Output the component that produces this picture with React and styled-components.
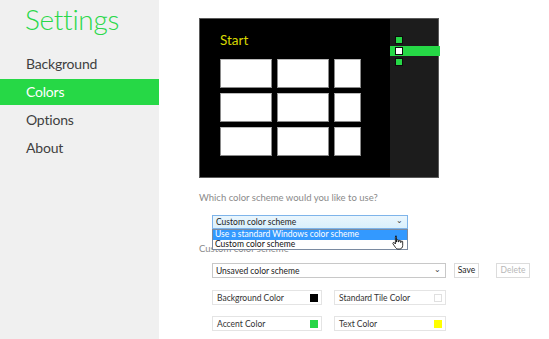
import React from "react"
import styled, { createGlobalStyle } from "styled-components"

const GlobalStyle = createGlobalStyle`
  html, body {
    margin: 0;
    padding: 0;
    background: #ffffff;
    font-family: Lato, "Open Sans", sans-serif;
  }
`

const menu = ["Background", "Colors", "Options", "About"]
const tileRows = [0, 1, 2]
const schemes = ["Use a standard Windows color scheme", "Custom color scheme"]
const colorFields = [
  { label: "Background Color", color: "#000000" },
  { label: "Standard Tile Color", color: "#ffffff", outline: true },
  { label: "Accent Color", color: "#26d646" },
  { label: "Text Color", color: "#ffff00" },
]

const HandCursor = () => (
  <svg width="12" height="15" viewBox="0 0 12 15">
    <path
      d="M3.5 1.2c.6 0 1 .4 1 1V7h.3V5.6c0-.5.4-.9.9-.9s.9.4.9.9V7h.3V6.2c0-.5.4-.9.9-.9s.9.4.9.9V7.5h.3v-.6c0-.5.4-.9.9-.9s.8.4.8.9v3.6c0 2-1.3 3.5-3.3 3.5H6.2c-1.2 0-2-.5-2.7-1.5L1 8.9c-.3-.5-.2-1 .2-1.3.4-.3 1-.2 1.3.2l.9 1.2V2.2c0-.6.4-1 1-1z"
      fill="#ffffff"
      stroke="#000000"
      strokeWidth="0.8"
    />
  </svg>
)

class App extends React.Component {
  render() {
    return (
      <Page>
        <GlobalStyle />
        <Sidebar>
          <Title>Settings</Title>
          <Menu>
            {menu.map((item) => (
              <MenuItem key={item} active={item === "Colors"}>
                {item}
              </MenuItem>
            ))}
          </Menu>
        </Sidebar>
        <Main>
          <Preview>
            <StartArea>
              <StartLabel>Start</StartLabel>
              <TileGrid>
                {tileRows.map((r) => (
                  <React.Fragment key={r}>
                    <Tile />
                    <Tile />
                    <Tile />
                  </React.Fragment>
                ))}
              </TileGrid>
            </StartArea>
            <Charms>
              <CharmDot />
              <CharmBar>
                <CharmDot selected />
              </CharmBar>
              <CharmDot />
            </Charms>
          </Preview>

          <Question>Which color scheme would you like to use?</Question>

          <DropdownWrap>
            <SchemeSelect>
              <span>Custom color scheme</span>
              <Chevron>⌄</Chevron>
            </SchemeSelect>
            <OptionList>
              {schemes.map((s, i) => (
                <OptionItem key={s} highlighted={i === 0}>
                  {s}
                </OptionItem>
              ))}
            </OptionList>
            <CursorSpot>
              <HandCursor />
            </CursorSpot>
          </DropdownWrap>

          <SubHeading>Custom color scheme</SubHeading>

          <SchemeRow>
            <PlainSelect>
              <span>Unsaved color scheme</span>
              <Chevron>⌄</Chevron>
            </PlainSelect>
            <Button>Save</Button>
            <Button disabled>Delete</Button>
          </SchemeRow>

          <ColorGrid>
            {colorFields.map((f) => (
              <ColorField key={f.label}>
                <span>{f.label}</span>
                <Swatch color={f.color} outline={f.outline} />
              </ColorField>
            ))}
          </ColorGrid>
        </Main>
      </Page>
    )
  }
}

const Page = styled.div`
  display: flex;
  width: 549px;
  height: 339px;
  overflow: hidden;
`

const Sidebar = styled.div`
  width: 159px;
  flex-shrink: 0;
  background: #f0f0f0;
  display: flex;
  flex-direction: column;
`

const Title = styled.div`
  padding: 0 0 0 25px;
  height: 51px;
  line-height: 38px;
  font-size: 28px;
  font-weight: 300;
  letter-spacing: -0.3px;
  color: #2ad84a;
`

const Menu = styled.div`
  display: flex;
  flex-direction: column;
  gap: 2px;
`

const MenuItem = styled.div`
  height: 26px;
  line-height: 26px;
  padding-left: 26px;
  font-size: 14px;
  letter-spacing: -0.2px;
  color: ${(p) => (p.active ? "#ffffff" : "#404040")};
  background: ${(p) => (p.active ? "#26d846" : "transparent")};
`

const Main = styled.div`
  flex: 1;
  padding: 18px 0 0 40px;
  display: flex;
  flex-direction: column;
`

const Preview = styled.div`
  width: 238px;
  height: 158px;
  border: 1px solid #5a5a5a;
  background: #000000;
  display: flex;
`

const StartArea = styled.div`
  flex: 1;
  padding: 12px 0 0 20px;
`

const StartLabel = styled.div`
  color: #d8d800;
  font-size: 13.5px;
  line-height: 18px;
  height: 28px;
`

const TileGrid = styled.div`
  display: grid;
  grid-template-columns: 52px 52px 27px;
  grid-auto-rows: 29px;
  gap: 5px;
`

const Tile = styled.div`
  background: #ffffff;
  border: 1px solid #8a8a8a;
  border-top-color: #bbbbbb;
  box-sizing: border-box;
`

const Charms = styled.div`
  width: 48px;
  background: #1c1c1c;
  display: flex;
  flex-direction: column;
  gap: 2px;
  padding-top: 17px;
`

const CharmBar = styled.div`
  height: 10px;
  margin-right: -2px;
  background: #26d846;
  display: flex;
  align-items: center;
`

const CharmDot = styled.div`
  width: 6px;
  height: 6px;
  margin-left: 5px;
  background: ${(p) => (p.selected ? "#ffffff" : "#26d846")};
  border: 1px solid #0c0c0c;
  box-sizing: content-box;
`

const Question = styled.div`
  margin-top: 12px;
  font-size: 9.5px;
  color: #8a8a8a;
  line-height: 16px;
`

const DropdownWrap = styled.div`
  position: relative;
  margin: 9px 0 0 13px;
  width: 196px;
`

const SchemeSelect = styled.div`
  height: 14px;
  box-sizing: border-box;
  border: 1px solid #7eb4ea;
  background: linear-gradient(#eaf6fd, #d9f0fc);
  display: flex;
  align-items: center;
  justify-content: space-between;
  padding: 0 4px 0 3px;
  font-size: 8.5px;
  color: #222;
`

const Chevron = styled.span`
  font-size: 8px;
  line-height: 8px;
  margin-top: -4px;
  color: #444;
`

const OptionList = styled.div`
  position: absolute;
  top: 14px;
  left: 0;
  width: 196px;
  box-sizing: border-box;
  border: 1px solid #7a8aa0;
  background: #ffffff;
  z-index: 2;
`

const OptionItem = styled.div`
  height: 9.5px;
  line-height: 9.5px;
  padding-left: 2px;
  font-size: 8.5px;
  color: ${(p) => (p.highlighted ? "#ffffff" : "#111")};
  background: ${(p) => (p.highlighted ? "#3399ff" : "#ffffff")};
`

const CursorSpot = styled.div`
  position: absolute;
  left: 180px;
  top: 19px;
  z-index: 3;
`

const SubHeading = styled.div`
  margin-top: 13px;
  font-size: 9.5px;
  color: #8a8a8a;
  line-height: 14px;
`

const SchemeRow = styled.div`
  display: flex;
  align-items: center;
  margin: 7px 0 0 13px;
`

const PlainSelect = styled.div`
  width: 234px;
  height: 15px;
  box-sizing: border-box;
  border: 1px solid #c8c8c8;
  background: #ffffff;
  display: flex;
  align-items: center;
  justify-content: space-between;
  padding: 0 4px 0 3px;
  font-size: 8.5px;
  color: #222;
`

const Button = styled.div`
  height: 15px;
  box-sizing: border-box;
  border: 1px solid #dcdcdc;
  background: #ffffff;
  font-size: 8.5px;
  line-height: 13px;
  text-align: center;
  width: ${(p) => (p.disabled ? "34px" : "25px")};
  margin-left: ${(p) => (p.disabled ? "17px" : "8px")};
  color: ${(p) => (p.disabled ? "#b8b8b8" : "#222")};
`

const ColorGrid = styled.div`
  display: grid;
  grid-template-columns: 110px 112px;
  column-gap: 12px;
  row-gap: 11px;
  margin: 12px 0 0 13px;
`

const ColorField = styled.div`
  height: 15px;
  box-sizing: border-box;
  border: 1px solid #e4e4e4;
  display: flex;
  align-items: center;
  justify-content: space-between;
  padding: 0 3px 0 4px;
  font-size: 8.5px;
  color: #333;
`

const Swatch = styled.div`
  width: 8px;
  height: 8px;
  box-sizing: border-box;
  background: ${(p) => p.color};
  border: 1px solid ${(p) => (p.outline ? "#e0e0e0" : p.color)};
`

export default App
